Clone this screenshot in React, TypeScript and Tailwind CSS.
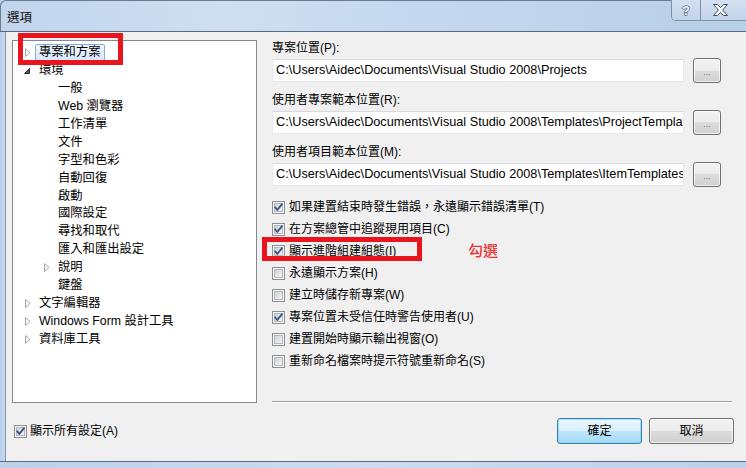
import React from "react";

function Check({ checked }: { checked: boolean }) {
  return (
    <svg width="13" height="13" viewBox="0 0 13 13" className="shrink-0">
      <defs>
        <linearGradient id="cbg" x1="0" y1="0" x2="1" y2="1">
          <stop offset="0" stopColor="#cbcfd5" />
          <stop offset="1" stopColor="#f7f7f7" />
        </linearGradient>
      </defs>
      <rect x="0.5" y="0.5" width="12" height="12" fill="#f6f6f6" stroke="#8e8f8f" />
      <rect x="2.5" y="2.5" width="8" height="8" fill="url(#cbg)" stroke="#b4b8be" />
      {checked && (
        <path d="M3.2 6.4 L5.3 8.8 L9.9 3.3" fill="none" stroke="#3d5488" strokeWidth="1.8" strokeLinecap="square" />
      )}
    </svg>
  );
}

function HollowArrow() {
  return (
    <svg width="6" height="9" viewBox="0 0 6 9">
      <polygon points="0.5,0.5 5,4.5 0.5,8.5" fill="#ffffff" stroke="#a6a6a6" />
    </svg>
  );
}

function OpenArrow() {
  return (
    <svg width="6" height="6" viewBox="0 0 6 6">
      <polygon points="5.5,0.5 5.5,5.5 0.5,5.5" fill="#595959" stroke="#262626" />
    </svg>
  );
}

type TreeItem = { label: string; level: number; arrow?: "closed" | "open"; selected?: boolean };

const tree: TreeItem[] = [
  { label: "專案和方案", level: 0, arrow: "closed", selected: true },
  { label: "環境", level: 0, arrow: "open" },
  { label: "一般", level: 1 },
  { label: "Web 瀏覽器", level: 1 },
  { label: "工作清單", level: 1 },
  { label: "文件", level: 1 },
  { label: "字型和色彩", level: 1 },
  { label: "自動回復", level: 1 },
  { label: "啟動", level: 1 },
  { label: "國際設定", level: 1 },
  { label: "尋找和取代", level: 1 },
  { label: "匯入和匯出設定", level: 1 },
  { label: "說明", level: 1, arrow: "closed" },
  { label: "鍵盤", level: 1 },
  { label: "文字編輯器", level: 0, arrow: "closed" },
  { label: "Windows Form 設計工具", level: 0, arrow: "closed" },
  { label: "資料庫工具", level: 0, arrow: "closed" },
];

const paths = [
  { label: "專案位置(P):", value: "C:\\Users\\Aidec\\Documents\\Visual Studio 2008\\Projects" },
  { label: "使用者專案範本位置(R):", value: "C:\\Users\\Aidec\\Documents\\Visual Studio 2008\\Templates\\ProjectTemplates" },
  { label: "使用者項目範本位置(M):", value: "C:\\Users\\Aidec\\Documents\\Visual Studio 2008\\Templates\\ItemTemplates" },
];

const checks = [
  { label: "如果建置結束時發生錯誤，永遠顯示錯誤清單(T)", checked: true },
  { label: "在方案總管中追蹤現用項目(C)", checked: true },
  { label: "顯示進階組建組態(I)", checked: true },
  { label: "永遠顯示方案(H)", checked: false },
  { label: "建立時儲存新專案(W)", checked: false },
  { label: "專案位置未受信任時警告使用者(U)", checked: true },
  { label: "建置開始時顯示輸出視窗(O)", checked: false },
  { label: "重新命名檔案時提示符號重新命名(S)", checked: false },
];

export default function App() {
  return (
    <div className="relative w-[746px] h-[468px] overflow-hidden flex flex-col text-[12px] text-black font-['Segoe_UI','Liberation_Sans','Noto_Sans_CJK_TC',sans-serif] bg-[#bcd1ea]">
      {/* Title bar */}
      <div className="h-[31px] flex items-start rounded-tl-[6px] border-t border-l border-[#6b7c94] bg-[linear-gradient(to_right,#c2d5ec_0%,#cfdff1_30%,#c4d7ed_60%,#b8cfe9_100%)]">
        <div className="pl-[6px] pt-[9px] leading-[16px] text-[12.5px] text-[#111]">選項</div>
        <div className="ml-auto flex h-[21px] mt-[-1px] border-l border-b border-[#7c8fab] rounded-bl-[5px] overflow-hidden shadow-[inset_1px_0_0_rgba(255,255,255,0.6)]">
          <div className="w-[29px] flex items-center justify-center border-r border-[#7c8fab] bg-[linear-gradient(to_bottom,#d3e1f1,#c2d4ea)]">
            <svg width="12" height="14" viewBox="0 0 12 14">
              <text x="6" y="12" textAnchor="middle" fontSize="13" fontWeight="bold" fontFamily="Liberation Sans, sans-serif" fill="#ffffff" stroke="#3c4b62" strokeWidth="1.2" paintOrder="stroke">?</text>
            </svg>
          </div>
          <div className="w-[45px] flex items-center justify-center pr-[6px] bg-[linear-gradient(to_bottom,#d3e1f1,#c2d4ea)]">
            <svg width="15" height="12" viewBox="0 0 15 12">
              <path d="M0.5 0.5 H4.5 L7.5 3.6 L10.5 0.5 H14.5 L9.6 6 L14.5 11.5 H10.5 L7.5 8.4 L4.5 11.5 H0.5 L5.4 6 Z" fill="#ffffff" stroke="#3c4b62" strokeWidth="1" />
            </svg>
          </div>
        </div>
      </div>

      {/* Body */}
      <div className="flex flex-1 min-h-0 border-t border-[#566a85]">
        <div className="w-[6px] bg-[linear-gradient(to_right,#b9cfe9,#c6d8ee)] border-r border-[#8296b1]" />
        <div className="flex-1 bg-[#f0f0f0] flex flex-col pl-[6px] pt-[8px]">
          <div className="flex h-[363px]">
            {/* Tree */}
            <div className="w-[245px] h-full bg-white border border-[#828790] pt-[3px]">
              {tree.map((t, i) => (
                <div key={i} className={`flex items-center h-[17.9px] ${t.level === 0 ? "pl-[6px]" : "pl-[25px]"}`}>
                  <div className={`w-[16px] flex items-center ${t.arrow === "open" ? "pl-[5px]" : "pl-[6px]"}`}>
                    {t.arrow === "closed" && <HollowArrow />}
                    {t.arrow === "open" && <OpenArrow />}
                  </div>
                  <div
                    className={`h-[17px] leading-[15px] px-[3px] border rounded-[2px] whitespace-nowrap text-[12.3px] ${
                      t.selected
                        ? "border-[#84acdd] bg-[linear-gradient(to_bottom,#f1f7fe,#d6e7fc)]"
                        : "border-transparent"
                    }`}
                  >
                    {t.label}
                  </div>
                </div>
              ))}
            </div>

            {/* Right panel */}
            <div className="ml-[15px] w-[460px] h-full flex flex-col">
              {paths.map((p, i) => (
                <div key={i} className={i === 0 ? "" : "mt-[10px]"}>
                  <div className="h-[16px] leading-[16px] whitespace-nowrap">{p.label}</div>
                  <div className="mt-[3px] flex items-center h-[23px]">
                    <div className="w-[412px] h-[23px] bg-white border border-[#e3e9ef] border-t-[#d5d9de] pl-[3px] leading-[21px] text-[12.7px] whitespace-nowrap overflow-hidden">
                      {p.value}
                    </div>
                    <div className="ml-[9px] w-[28px] h-[25px] shrink-0 rounded-[3px] border border-[#707070] bg-[linear-gradient(to_bottom,#f2f2f2_0%,#ebebeb_50%,#dddddd_50%,#cfcfcf_100%)] shadow-[inset_0_0_0_1px_rgba(255,255,255,0.7)] flex items-end justify-center pb-[5px]">
                      <span className="text-[9px] leading-[9px] text-[#6d6d6d]">...</span>
                    </div>
                  </div>
                </div>
              ))}
              <div className="mt-[10px] flex flex-col">
                {checks.map((c, i) => (
                  <div key={i} className="h-[22px] flex items-center gap-[4px] whitespace-nowrap">
                    <Check checked={c.checked} />
                    <span className="leading-[16px]">{c.label}</span>
                  </div>
                ))}
              </div>
              <div className="mt-auto h-[2px] border-t border-[#a0a0a0] border-b border-b-white" />
            </div>
          </div>

          {/* Bottom row */}
          <div className="mt-[15px] h-[26px] flex items-center pr-[12px]">
            <div className="ml-[2px] flex items-center gap-[3px]">
              <Check checked={true} />
              <span className="leading-[16px]">顯示所有設定(A)</span>
            </div>
            <div className="ml-auto flex gap-[7px]">
              <div className="w-[85px] h-[26px] rounded-[3px] border border-[#3c7fb1] bg-[linear-gradient(to_bottom,#eaf6fd_0%,#d9f0fc_50%,#bee6fd_50%,#a7d9f5_100%)] shadow-[inset_0_0_0_1px_rgba(120,210,245,0.6)] flex items-center justify-center">
                確定
              </div>
              <div className="w-[85px] h-[26px] rounded-[3px] border border-[#707070] bg-[linear-gradient(to_bottom,#f2f2f2_0%,#ebebeb_50%,#dddddd_50%,#cfcfcf_100%)] shadow-[inset_0_0_0_1px_rgba(255,255,255,0.7)] flex items-center justify-center">
                取消
              </div>
            </div>
          </div>
        </div>
      </div>
      <div className="h-[7px] border-t border-[#566a85] bg-[linear-gradient(to_right,#bcd1ea,#cddcf0,#bcd1ea)]" />

      {/* Annotations */}
      <div className="absolute left-[18px] top-[33px] w-[105px] h-[32px] border-[5px] border-[#e8151f]" />
      <div className="absolute left-[262px] top-[237px] w-[160px] h-[24px] border-[5px] border-[#e8151f]" />
      <div className="absolute left-[468px] top-[241px] text-[15px] leading-[18px] font-medium text-[#e5393b] font-['Noto_Sans_CJK_TC',sans-serif]">勾選</div>
    </div>
  );
}
